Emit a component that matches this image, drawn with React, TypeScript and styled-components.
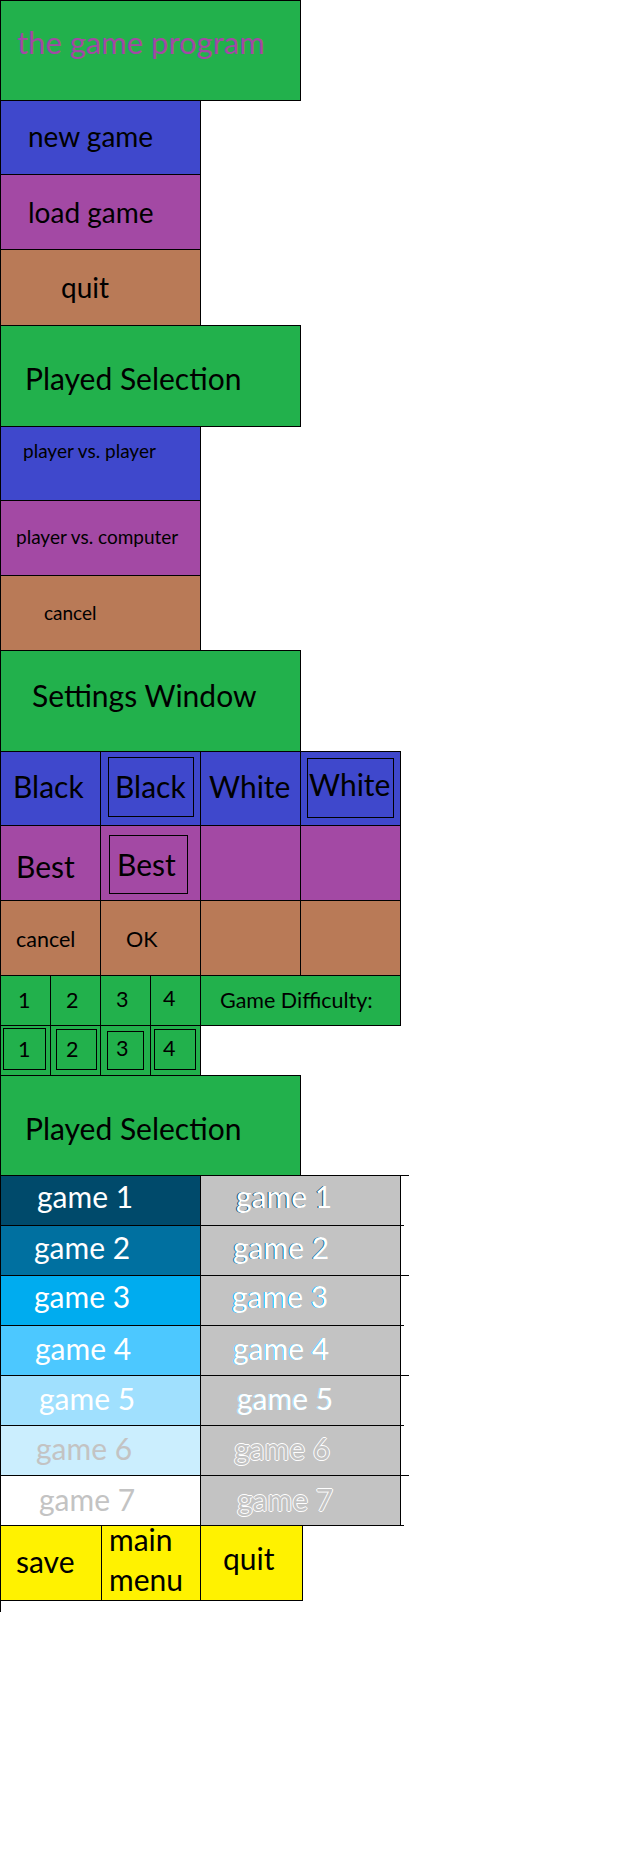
import React from 'react';
import styled, { createGlobalStyle } from 'styled-components';

const GlobalStyle = createGlobalStyle`
  html, body {
    margin: 0;
    padding: 0;
    background: #fff;
  }
  body {
    font-family: Lato, "Open Sans", "DejaVu Sans", sans-serif;
    color: #000;
  }
`;

const GREEN = '#22b14c';
const BLUE = '#3f48cc';
const PURPLE = '#a349a4';
const BROWN = '#b97a57';
const YELLOW = '#fff200';
const GREY = '#c3c3c3';

// places a text baseline at `base` px below the outer top edge of its bordered box
const lift = (base: number, size: number, lh?: number) => {
  const line = lh ?? size;
  return base - ((line - 1.2 * size) / 2 + 0.987 * size);
};

const Sheet = styled.div`
  display: flex;
  flex-direction: column;
  align-items: flex-start;
  width: 638px;
  height: 1856px;
`;

const Caption = styled.span<{
  $x: number;
  $base: number;
  $size: number;
  $lh?: number;
  $color?: string;
  $shadow?: string;
}>`
  display: block;
  margin-left: ${(p) => p.$x - 1}px;
  margin-top: ${(p) => lift(p.$base, p.$size, p.$lh)}px;
  font-size: ${(p) => p.$size}px;
  line-height: ${(p) => p.$lh ?? p.$size}px;
  color: ${(p) => p.$color ?? '#000'};
  text-shadow: ${(p) => p.$shadow ?? 'none'};
  white-space: nowrap;
`;

const Banner = styled.header<{ $h: number }>`
  box-sizing: border-box;
  width: 301px;
  height: ${(p) => p.$h}px;
  margin-top: -1px;
  border: 1px solid #000;
  background: ${GREEN};
  overflow: hidden;
  &:first-child {
    margin-top: 0;
  }
`;

const MenuButton = styled.div<{ $h: number; $bg: string }>`
  box-sizing: border-box;
  width: 201px;
  height: ${(p) => p.$h}px;
  margin-top: -1px;
  border: 1px solid #000;
  background: ${(p) => p.$bg};
`;

const Row = styled.div<{ $h: number }>`
  position: relative;
  display: flex;
  height: ${(p) => p.$h}px;
  margin-top: -1px;
`;

const Cell = styled.div<{ $w: number; $bg: string }>`
  box-sizing: border-box;
  flex: none;
  width: ${(p) => p.$w}px;
  height: 100%;
  border: 1px solid #000;
  background: ${(p) => p.$bg};
  & + & {
    margin-left: -1px;
  }
`;

const Frame = styled.div<{ $x: number; $y: number; $w: number; $h: number }>`
  box-sizing: border-box;
  width: ${(p) => p.$w}px;
  height: ${(p) => p.$h}px;
  margin-left: ${(p) => p.$x - 1}px;
  margin-top: ${(p) => p.$y - 1}px;
  border: 1px solid #000;
`;

const GameRow = styled(Row)<{ $ext: number; $tail?: number }>`
  &::before {
    content: '';
    position: absolute;
    left: 400px;
    top: 0;
    width: ${(p) => p.$ext}px;
    height: 1px;
    background: #000;
  }
  &::after {
    content: '';
    display: ${(p) => (p.$tail ? 'block' : 'none')};
    position: absolute;
    left: 400px;
    bottom: 0;
    width: ${(p) => p.$tail ?? 0}px;
    height: 1px;
    background: #000;
  }
`;

const Tail = styled.div`
  width: 200px;
  height: 12px;
  margin-top: -1px;
  border-left: 1px solid #000;
`;

const BIG = 30;
const MID = 28;
const SMALL = 21.5;
const TINY = 19;

const games = [
  { bg: '#004a6b', base: 32, x: 37, rx: 36, ext: 9 },
  { bg: '#0070a0', base: 33, x: 34, rx: 33, ext: 4 },
  { bg: '#00acef', base: 32, x: 34, rx: 32, ext: 9 },
  { bg: '#4cc8ff', base: 34, x: 35, rx: 33, ext: 4 },
  { bg: '#a0e0fe', base: 34, x: 39, rx: 37, ext: 9 },
  { bg: '#cbeefe', base: 34, x: 36, rx: 34, ext: 4 },
  { bg: '#ffffff', base: 35, x: 39, rx: 37, ext: 9 },
];

const digitFrames = [
  { x: 3, y: 3, w: 43, h: 42, tx: 15, base: 29 },
  { x: 6, y: 4, w: 41, h: 41, tx: 10, base: 28 },
  { x: 7, y: 6, w: 37, h: 39, tx: 9, base: 25 },
  { x: 4, y: 4, w: 42, h: 41, tx: 9, base: 27 },
];

const outline = '1px 0 #fff, -1px 0 #fff, 0 1px #fff, 0 -1px #fff';

export default function App() {
  return (
    <Sheet>
      <GlobalStyle />

      <Banner $h={101}>
        <Caption $x={17} $base={53} $size={31} $color={PURPLE}>
          the game program
        </Caption>
      </Banner>
      <MenuButton $h={75} $bg={BLUE}>
        <Caption $x={28} $base={46} $size={MID}>new game</Caption>
      </MenuButton>
      <MenuButton $h={76} $bg={PURPLE}>
        <Caption $x={28} $base={48} $size={MID}>load game</Caption>
      </MenuButton>
      <MenuButton $h={77} $bg={BROWN}>
        <Caption $x={61} $base={48} $size={MID}>quit</Caption>
      </MenuButton>

      <Banner $h={102}>
        <Caption $x={25} $base={64} $size={BIG}>Played Selection</Caption>
      </Banner>
      <MenuButton $h={75} $bg={BLUE}>
        <Caption $x={23} $base={31} $size={TINY}>player vs. player</Caption>
      </MenuButton>
      <MenuButton $h={76} $bg={PURPLE}>
        <Caption $x={16} $base={43} $size={TINY}>player vs. computer</Caption>
      </MenuButton>
      <MenuButton $h={76} $bg={BROWN}>
        <Caption $x={44} $base={44} $size={TINY}>cancel</Caption>
      </MenuButton>

      <Banner $h={102}>
        <Caption $x={32} $base={56} $size={BIG}>Settings Window</Caption>
      </Banner>
      <Row $h={75}>
        <Cell $w={101} $bg={BLUE}>
          <Caption $x={13} $base={46} $size={BIG}>Black</Caption>
        </Cell>
        <Cell $w={101} $bg={BLUE}>
          <Frame $x={8} $y={6} $w={86} $h={60}>
            <Caption $x={7} $base={40} $size={BIG}>Black</Caption>
          </Frame>
        </Cell>
        <Cell $w={101} $bg={BLUE}>
          <Caption $x={9} $base={46} $size={BIG}>White</Caption>
        </Cell>
        <Cell $w={101} $bg={BLUE}>
          <Frame $x={7} $y={7} $w={87} $h={60}>
            <Caption $x={2} $base={37} $size={BIG}>White</Caption>
          </Frame>
        </Cell>
      </Row>
      <Row $h={76}>
        <Cell $w={101} $bg={PURPLE}>
          <Caption $x={16} $base={52} $size={BIG}>Best</Caption>
        </Cell>
        <Cell $w={101} $bg={PURPLE}>
          <Frame $x={9} $y={10} $w={79} $h={59}>
            <Caption $x={8} $base={40} $size={BIG}>Best</Caption>
          </Frame>
        </Cell>
        <Cell $w={101} $bg={PURPLE} />
        <Cell $w={101} $bg={PURPLE} />
      </Row>
      <Row $h={76}>
        <Cell $w={101} $bg={BROWN}>
          <Caption $x={16} $base={47} $size={SMALL}>cancel</Caption>
        </Cell>
        <Cell $w={101} $bg={BROWN}>
          <Caption $x={26} $base={47} $size={SMALL}>OK</Caption>
        </Cell>
        <Cell $w={101} $bg={BROWN} />
        <Cell $w={101} $bg={BROWN} />
      </Row>
      <Row $h={51}>
        <Cell $w={51} $bg={GREEN}>
          <Caption $x={18} $base={33} $size={SMALL}>1</Caption>
        </Cell>
        <Cell $w={51} $bg={GREEN}>
          <Caption $x={16} $base={33} $size={SMALL}>2</Caption>
        </Cell>
        <Cell $w={51} $bg={GREEN}>
          <Caption $x={16} $base={32} $size={SMALL}>3</Caption>
        </Cell>
        <Cell $w={51} $bg={GREEN}>
          <Caption $x={13} $base={31} $size={SMALL}>4</Caption>
        </Cell>
        <Cell $w={201} $bg={GREEN}>
          <Caption $x={20} $base={33} $size={SMALL}>Game Difficulty:</Caption>
        </Cell>
      </Row>
      <Row $h={51}>
        {digitFrames.map((f, i) => (
          <Cell key={i} $w={51} $bg={GREEN}>
            <Frame $x={f.x} $y={f.y} $w={f.w} $h={f.h}>
              <Caption $x={f.tx} $base={f.base} $size={SMALL}>
                {i + 1}
              </Caption>
            </Frame>
          </Cell>
        ))}
      </Row>

      <Banner $h={101}>
        <Caption $x={25} $base={64} $size={BIG}>Played Selection</Caption>
      </Banner>
      {games.map((g, i) => {
        const faded = i >= 5;
        return (
          <GameRow key={i} $h={51} $ext={g.ext} $tail={i === games.length - 1 ? 4 : undefined}>
            <Cell $w={201} $bg={g.bg}>
              <Caption $x={g.x} $base={g.base} $size={BIG} $color={faded ? GREY : '#fff'}>
                game {i + 1}
              </Caption>
            </Cell>
            <Cell $w={201} $bg={GREY}>
              <Caption
                $x={g.rx}
                $base={g.base}
                $size={BIG}
                $color={faded ? GREY : '#fff'}
                $shadow={faded ? outline : `-1px 0 ${g.bg}`}
              >
                game {i + 1}
              </Caption>
            </Cell>
          </GameRow>
        );
      })}
      <Row $h={76}>
        <Cell $w={102} $bg={YELLOW}>
          <Caption $x={16} $base={47} $size={BIG}>save</Caption>
        </Cell>
        <Cell $w={100} $bg={YELLOW}>
          <Caption $x={8} $base={25} $size={BIG} $lh={40}>
            main
            <br />
            menu
          </Caption>
        </Cell>
        <Cell $w={103} $bg={YELLOW}>
          <Caption $x={23} $base={44} $size={BIG}>quit</Caption>
        </Cell>
      </Row>
      <Tail />
    </Sheet>
  );
}
